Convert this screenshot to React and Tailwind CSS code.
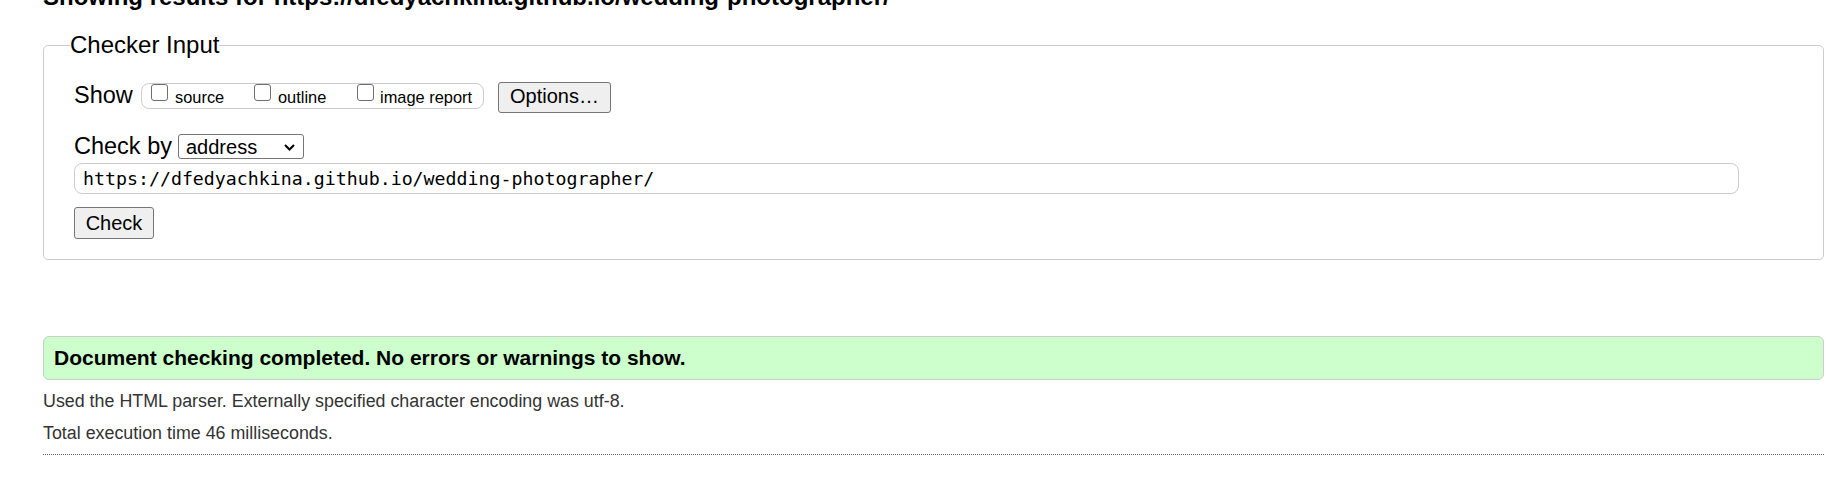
export default function App() {
  return (
    <div className="w-[1844px] h-[488px] overflow-hidden bg-white text-black font-['Liberation_Sans',Arial,sans-serif]">
      <div className="-mt-[17px] ml-[43px] w-[1781px]">
        <h2 className="text-[24px] leading-[28px] font-bold whitespace-nowrap">
          Showing results for https://dfedyachkina.github.io/wedding-photographer/
        </h2>

        <fieldset className="mt-[20px] border border-[#cccccc] rounded-[5px] pl-[30px] pr-[30px] pt-[22px] pb-[20px]">
          <legend className="-ml-[4px] text-[24px] leading-[28px]">Checker Input</legend>

          <div className="flex items-start">
            <span className="w-[67px] shrink-0 text-[23.5px] leading-[28px]">Show</span>
            <div className="mt-[2px] w-[343px] h-[26px] shrink-0 border border-[#cccccc] rounded-[8px] flex items-start pl-[9px]">
              <label className="w-[103px] flex items-start shrink-0">
                <span className="w-[17px] h-[17px] shrink-0 border-[1.5px] border-[#6f6f6f] rounded-[3px] bg-white" />
                <span className="ml-[7px] mt-[1px] text-[16.4px] leading-[24px]">source</span>
              </label>
              <label className="w-[103px] flex items-start shrink-0">
                <span className="w-[17px] h-[17px] shrink-0 border-[1.5px] border-[#6f6f6f] rounded-[3px] bg-white" />
                <span className="ml-[7px] mt-[1px] text-[16.4px] leading-[24px]">outline</span>
              </label>
              <label className="flex items-start shrink-0">
                <span className="w-[17px] h-[17px] shrink-0 border-[1.5px] border-[#6f6f6f] rounded-[3px] bg-white" />
                <span className="ml-[6px] mt-[1px] text-[16.4px] leading-[24px] whitespace-nowrap">image report</span>
              </label>
            </div>
            <div className="mt-[1px] ml-[14px] w-[113px] h-[31px] shrink-0 border border-[#767676] rounded-[3px] bg-[#efefef] flex items-center justify-center pb-[3px] text-[20px]">
              Options…
            </div>
          </div>

          <div className="mt-[19px] flex items-start">
            <span className="w-[104px] shrink-0 text-[23.5px] leading-[28px] whitespace-nowrap">Check by</span>
            <div className="mt-[2px] w-[126px] h-[25px] shrink-0 border border-[#767676] rounded-[3px] bg-white flex items-center justify-between pl-[7px] pr-[8px] text-[20px]">
              <span>address</span>
              <svg width="11" height="7" viewBox="0 0 11 7" className="mt-[2px]">
                <polyline points="1,1 5.5,5.5 10,1" fill="none" stroke="#000" strokeWidth="2" />
              </svg>
            </div>
          </div>

          <div className="mt-[3px] w-[1665px] h-[31px] border border-[#cccccc] rounded-[8px] bg-white flex items-center pl-[8px] font-['DejaVu_Sans_Mono',monospace] text-[18.25px]">
            https://dfedyachkina.github.io/wedding-photographer/
          </div>

          <div className="mt-[13px] w-[80px] h-[32px] border border-[#767676] rounded-[3px] bg-[#efefef] flex items-center justify-center text-[20px]">
            Check
          </div>
        </fieldset>

        <div className="mt-[76px] h-[44px] border border-[#cccccc] rounded-[6px] bg-[#ccffcc] flex items-center pl-[10px] text-[21px] font-bold">
          Document checking completed. No errors or warnings to show.
        </div>

        <p className="mt-[11px] text-[17.85px] leading-[20px] text-[#333333]">
          Used the HTML parser. Externally specified character encoding was utf-8.
        </p>
        <p className="mt-[12px] text-[17.85px] leading-[20px] text-[#333333]">
          Total execution time 46 milliseconds.
        </p>
        <div className="mt-[11px] border-t border-dotted border-[#666666]" />
      </div>
    </div>
  );
}
